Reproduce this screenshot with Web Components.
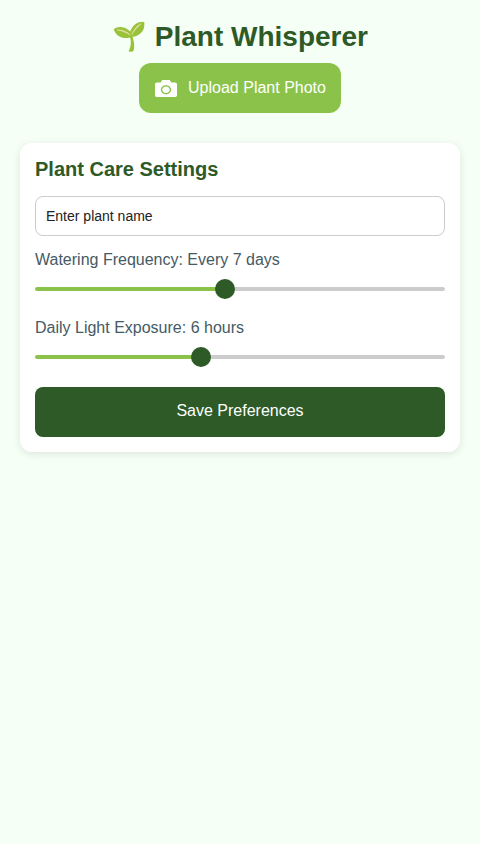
<!DOCTYPE html>
<html lang="en">
<head>
<meta charset="utf-8">
<title>Plant Whisperer</title>
<style>
  html, body { margin: 0; min-height: 100%; background: #f5fff5; }
  body { font-family: "Liberation Sans", Arial, sans-serif; padding: 20px; box-sizing: border-box; min-height: 844px; }
</style>
</head>
<body>
  <plant-app>
    <plant-header slot="header" title="Plant Whisperer"></plant-header>
    <upload-button slot="header">Upload Plant Photo</upload-button>
    <care-card heading="Plant Care Settings">
      <name-input placeholder="Enter plant name"></name-input>
      <range-field template="Watering Frequency: Every {v} days" min="1" max="14" value="7"></range-field>
      <range-field template="Daily Light Exposure: {v} hours" min="2" max="12" value="6"></range-field>
      <save-button>Save Preferences</save-button>
    </care-card>
  </plant-app>

<script>
  /* layout: header centrado + tarjeta */
  class PlantApp extends HTMLElement {
    constructor() {
      super();
      this.attachShadow({ mode: 'open' });
      this.shadowRoot.innerHTML = `
        <style>
          :host { display: block; }
          .top { display: flex; flex-direction: column; align-items: center; margin-bottom: 30px; }
        </style>
        <div class="top"><slot name="header"></slot></div>
        <slot></slot>
      `;
    }
  }
  customElements.define('plant-app', PlantApp);

  class PlantHeader extends HTMLElement {
    constructor() {
      super();
      this.attachShadow({ mode: 'open' });
    }

    connectedCallback() {
      this.shadowRoot.innerHTML = `
        <style>
          :host { display: block; margin-bottom: 10px; }
          h1 { margin: 0; font-size: 28px; line-height: 33px; font-weight: 700; color: #2d5a27; text-align: center; }
        </style>
        <h1>🌱 ${this.getAttribute('title') || ''}</h1>
      `;
    }
  }
  customElements.define('plant-header', PlantHeader);

  class UploadButton extends HTMLElement {
    constructor() {
      super();
      this.attachShadow({ mode: 'open' });
      this.shadowRoot.innerHTML = `
        <style>
          :host { display: block; }
          button {
            display: flex; align-items: center; gap: 11px; height: 50px; padding: 0 15px 0 16px;
            background: #8bc34a; color: #fff; border: none; border-radius: 12px;
            font: 16px "Liberation Sans", Arial, sans-serif; cursor: pointer;
          }
          svg { width: 22px; height: 17px; display: block; fill: #fff; }
        </style>
        <button type="button">
          <svg viewBox="0 32 512 448" preserveAspectRatio="none" aria-hidden="true">
            <path d="M512 144v288c0 26.500-21.500 48-48 48H48c-26.500 0-48-21.500-48-48V144c0-26.500 21.500-48 48-48h88l12.300-32.900c7-18.700 24.900-31.100 44.900-31.100h125.500c20 0 37.900 12.400 44.900 31.100L376 96h88c26.500 0 48 21.500 48 48zM376 288c0-66.200-53.800-120-120-120s-120 53.800-120 120 53.800 120 120 120 120-53.800 120-120zm-32 0c0 48.500-39.500 88-88 88s-88-39.500-88-88 39.500-88 88-88 88 39.500 88 88z"/>
          </svg>
          <span><slot></slot></span>
        </button>
      `;
    }
  }
  customElements.define('upload-button', UploadButton);

  class CareCard extends HTMLElement {
    constructor() {
      super();
      this.attachShadow({ mode: 'open' });
    }

    connectedCallback() {
      this.shadowRoot.innerHTML = `
        <style>
          :host {
            display: block; background: #fff; border-radius: 12px; padding: 15px;
            box-shadow: 0 2px 8px rgba(0,0,0,.1);
          }
          h2 { margin: 0 0 15px; font-size: 20px; line-height: 23px; font-weight: 700; color: #2d5a27; }
        </style>
        <h2>${this.getAttribute('heading') || ''}</h2>
        <slot></slot>
      `;
    }
  }
  customElements.define('care-card', CareCard);

  class NameInput extends HTMLElement {
    constructor() {
      super();
      this.attachShadow({ mode: 'open' });
    }

    connectedCallback() {
      this.shadowRoot.innerHTML = `
        <style>
          :host { display: block; margin-bottom: 15px; }
          input {
            display: block; width: 100%; height: 40px; box-sizing: border-box; padding: 0 10px;
            border: 1px solid #ccc; border-radius: 8px; background: #fff; color: #222;
            font: 14px "Liberation Sans", Arial, sans-serif; outline: none;
          }
          input::placeholder { color: #222; opacity: 1; }
        </style>
        <input type="text" placeholder="${this.getAttribute('placeholder') || ''}">
      `;
    }
  }
  customElements.define('name-input', NameInput);

  class RangeField extends HTMLElement {
    constructor() {
      super();
      this.attachShadow({ mode: 'open' });
    }

    connectedCallback() {
      const min = this.getAttribute('min');
      const max = this.getAttribute('max');
      const value = this.getAttribute('value');
      this.shadowRoot.innerHTML = `
        <style>
          :host { display: block; margin-bottom: 20px; }
          label { display: block; font-size: 16px; line-height: 18px; color: #455a64; margin-bottom: 10px; }
          input {
            -webkit-appearance: none; appearance: none; display: block; width: 100%; height: 20px;
            margin: 0; background: transparent; cursor: pointer; outline: none;
          }
          input::-webkit-slider-runnable-track {
            height: 4px; border-radius: 2px;
            background: linear-gradient(to right, #8bc34a var(--fill), #ccc var(--fill));
          }
          input::-webkit-slider-thumb {
            -webkit-appearance: none; width: 20px; height: 20px; margin-top: -8px;
            border-radius: 50%; background: #2d5a27; border: none;
          }
        </style>
        <label></label>
        <input type="range" min="${min}" max="${max}" value="${value}">
      `;
      this.input = this.shadowRoot.querySelector('input');
      this.input.addEventListener('input', () => this.actualizar());
      this.actualizar();
    }

    actualizar() {
      const { min, max, value } = this.input;
      const t = (value - min) / (max - min);
      this.input.style.setProperty('--fill', `calc(10px + (100% - 20px) * ${t})`);
      this.shadowRoot.querySelector('label').textContent = this.getAttribute('template').replace('{v}', value);
    }
  }
  customElements.define('range-field', RangeField);

  class SaveButton extends HTMLElement {
    constructor() {
      super();
      this.attachShadow({ mode: 'open' });
      this.shadowRoot.innerHTML = `
        <style>
          :host { display: block; }
          button {
            display: block; width: 100%; height: 50px; padding: 0 0 2px; background: #2d5a27; color: #fff;
            border: none; border-radius: 8px; font: 16px "Liberation Sans", Arial, sans-serif; cursor: pointer;
          }
        </style>
        <button type="button"><slot></slot></button>
      `;
    }
  }
  customElements.define('save-button', SaveButton);
</script>
</body>
</html>
